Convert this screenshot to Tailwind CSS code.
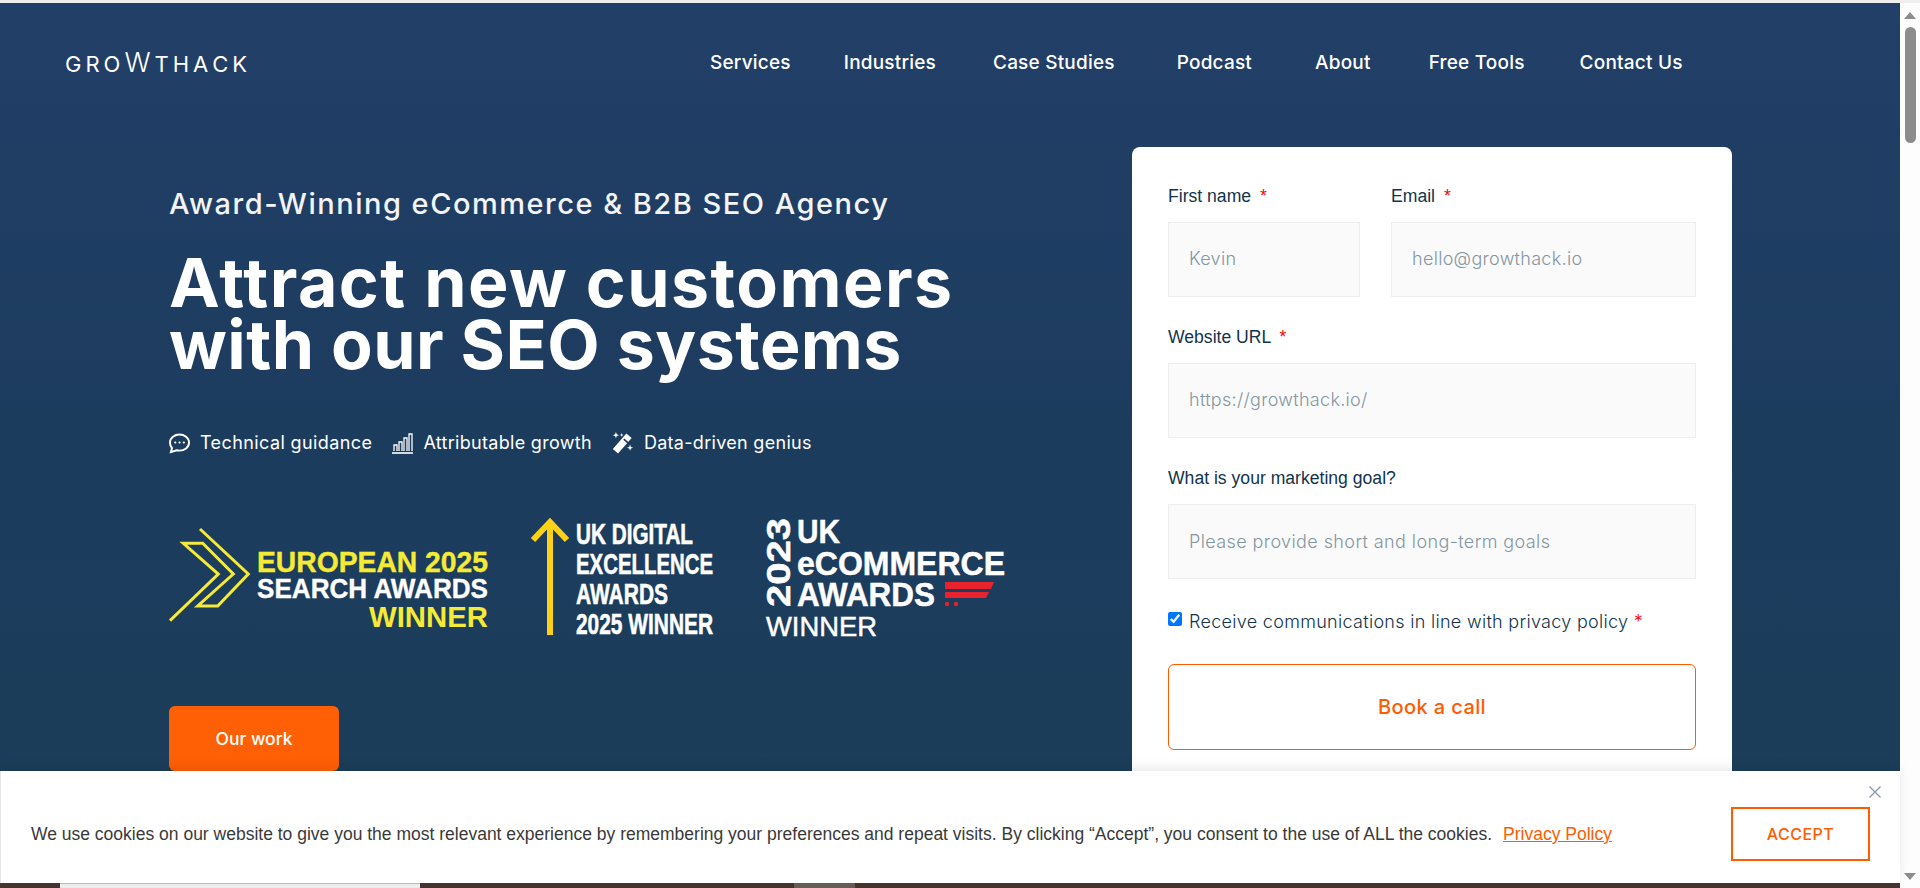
<!DOCTYPE html>
<html lang="en">
  <head>
    <meta charset="UTF-8" />
    <title>GrowthHack</title>
    <script src="https://cdn.jsdelivr.net/npm/@tailwindcss/browser@4"></script>
  </head>
  <body class="h-screen overflow-hidden bg-[#eeeeee] font-['Inter',sans-serif]">
    <div class="relative flex h-[888px] flex-col pt-[3px]">
      <div class="flex min-h-0 flex-1">
        <main class="min-w-0 flex-1">
          <!-- hero -->
          <section class="h-[880px] bg-gradient-to-b from-[#223f68] via-[#1c3c5e] to-[#1b3e58]">
            <header class="flex h-[120px] items-start">
              <a class="ml-[65px] mt-[46px] flex h-[28px] w-[182px] items-baseline justify-between text-[22px] leading-[28px] text-white"><span>G</span><span>R</span><span>O</span><span class="text-[27px] font-light">W</span><span>T</span><span>H</span><span>A</span><span>C</span><span>K</span></a>
              <nav class="ml-[463px] mt-[48px] flex text-[19px] leading-[24px] font-medium tracking-[0.2px] text-white">
                <a>Services</a>
                <a class="ml-[53px]">Industries</a>
                <a class="ml-[57px]">Case Studies</a>
                <a class="ml-[62px]">Podcast</a>
                <a class="ml-[63px]">About</a>
                <a class="ml-[58px]">Free Tools</a>
                <a class="ml-[55px]">Contact Us</a>
              </nav>
            </header>

            <div class="flex">
              <div class="ml-[169px] w-[963px] pt-[61px]">
                <p class="text-[29px] leading-[40px] font-medium tracking-[1.5px] text-[#f2f4f7]">Award-Winning eCommerce &amp; B2B SEO Agency</p>
                <h1 class="mt-[27px] text-[68px] leading-[62px] font-bold text-white"><span class="tracking-[1.45px]">Attract new customers</span><br /><span class="tracking-[0.45px]">with our SEO systems</span></h1>

                <ul class="mt-[56px] flex items-center text-[18px] leading-[24px] tracking-[0.4px] text-white">
                  <li class="flex items-center gap-[10px]">
                    <svg class="h-[21px] w-[21px]" viewBox="1 2 22 21" fill="none" stroke="white" stroke-width="2">
                      <path d="M12 3c5 0 10 3.400 10 8.500S17 20 12 20c-1 0-2-.1-3-.4L3 21.500l1.200-4.200C2.800 15.800 2 13.800 2 11.500 2 6.400 7 3 12 3z" />
                      <path d="M7.500 11.500h.1M12 11.500h.1M16.500 11.500h.1" stroke-linecap="round" stroke-width="2.200" />
                    </svg>
                    Technical guidance
                  </li>
                  <li class="ml-[20px] flex items-center gap-[10px] tracking-[0.3px]">
                    <svg class="h-[21px] w-[21px]" viewBox="0 0 21 21" fill="none" stroke="white" stroke-width="1.300">
                      <path d="M0 20h21" stroke-width="1.600" />
                      <path d="M2 18v-6h3v6M7 18V9h3v9M12 18V5h3v13M17 18V1h3v17" />
                    </svg>
                    Attributable growth
                  </li>
                  <li class="ml-[20px] flex items-center gap-[10px] tracking-[0.3px]">
                    <svg class="h-[22px] w-[22px]" viewBox="0.500 0 20.500 21" fill="white">
                      <path d="M14 1.500l5 4.300L6 20.500l-5-4.300z" />
                      <path d="M11 7.500l4.200 3.600 1-1.200L12 6.300z" fill="#1b3b5e" />
                      <path d="M4 0l.8 2.200L7 3 4.800 3.800 4 6l-.8-2.200L1 3l2.200-.8zM17.500 12l.8 2.200 2.200.8-2.200.8-.8 2.200-.8-2.200-2.200-.8 2.200-.8zM9.500 1l.5 1.300 1.300.5-1.300.5-.5 1.300-.5-1.300-1.300-.5 1.300-.5z" />
                    </svg>
                    Data-driven genius
                  </li>
                </ul>

                <!-- award logos -->
                <div class="mt-[58px] flex h-[130px] items-start font-['Liberation_Sans',sans-serif]">
                  <svg class="mt-[15px] h-[102px] w-[320px] shrink-0 overflow-visible" viewBox="0 0 320 102" fill="none">
                    <path d="M31 1 79.300 46 48.700 78H28.700L64.300 46 33.700 15.300H14.300L49.300 46 1 92.700" stroke="#f5ea35" stroke-width="3" />
                    <g font-weight="700">
                      <text x="88" y="44" font-size="29" fill="#f5ea35" stroke="#f5ea35" stroke-width="0.4" textLength="231" lengthAdjust="spacingAndGlyphs">EUROPEAN 2025</text>
                      <text x="88" y="70" font-size="28" fill="#ffffff" stroke="#ffffff" stroke-width="0.4" textLength="231" lengthAdjust="spacingAndGlyphs">SEARCH AWARDS</text>
                      <text x="200" y="99" font-size="29" fill="#f5ea35" textLength="119" lengthAdjust="spacingAndGlyphs">WINNER</text>
                    </g>
                  </svg>
                  <svg class="ml-[41px] h-[130px] w-[190px] shrink-0 overflow-visible" viewBox="0 0 190 130" fill="none">
                    <path d="M3 27 20 9 37 27M20 10V122" stroke="#fcd116" stroke-width="6" />
                    <g fill="#ffffff" stroke="#ffffff" stroke-width="0.6" font-weight="700" font-size="30">
                      <text x="46" y="31" textLength="117" lengthAdjust="spacingAndGlyphs">UK DIGITAL</text>
                      <text x="46" y="61" textLength="137" lengthAdjust="spacingAndGlyphs">EXCELLENCE</text>
                      <text x="46" y="91" textLength="92" lengthAdjust="spacingAndGlyphs">AWARDS</text>
                      <text x="46" y="121" textLength="137" lengthAdjust="spacingAndGlyphs">2025 WINNER</text>
                    </g>
                  </svg>
                  <svg class="ml-[46px] h-[130px] w-[245px] shrink-0 overflow-visible" viewBox="0 0 245 130" fill="none">
                    <g fill="#ffffff" font-weight="700" stroke="#ffffff" stroke-width="0.5">
                      <text transform="translate(24 94) rotate(-90)" font-size="34" textLength="89" lengthAdjust="spacingAndGlyphs">2023</text>
                      <text x="31" y="30" font-size="34" textLength="43" lengthAdjust="spacingAndGlyphs">UK</text>
                      <text x="31" y="62" font-size="33" textLength="208" lengthAdjust="spacingAndGlyphs">eCOMMERCE</text>
                      <text x="31" y="93" font-size="34" textLength="138" lengthAdjust="spacingAndGlyphs">AWARDS</text>
                      <text x="0" y="123" font-size="28" font-weight="400" textLength="111" lengthAdjust="spacingAndGlyphs">WINNER</text>
                    </g>
                    <path d="M179 69H228L225 76H179zM179 79H223L220 85H179z" fill="#e8232e" />
                    <circle cx="181" cy="91" r="2.200" fill="#e8232e" />
                    <circle cx="190" cy="91" r="2.200" fill="#e8232e" />
                  </svg>
                </div>

                <a class="mt-[63px] flex h-[65px] w-[170px] items-center justify-center rounded-[6px] bg-[#ff5f05] pt-[2px] text-[17.5px] font-medium text-white">Our work</a>
              </div>

              <!-- form card -->
              <form class="mt-[24px] h-[700px] w-[600px] rounded-t-[8px] bg-white px-[36px] pt-[37px] text-[#12344d]">
                <div class="grid grid-cols-[192px_305px] gap-x-[31px]">
                  <div>
                    <label class="block text-[17.6px] leading-[24px] font-['Liberation_Sans',sans-serif]">First name <span class="ml-[4px] text-[#ff0000]">*</span></label>
                    <input class="mt-[14px] h-[75px] w-full border border-[#eeeeee] bg-[#fafafa] px-[20px] pb-[2px] text-[18px] font-light tracking-[0.3px] placeholder:text-[#8496a3]" placeholder="Kevin" />
                  </div>
                  <div>
                    <label class="block text-[17.6px] leading-[24px] font-['Liberation_Sans',sans-serif]">Email <span class="ml-[4px] text-[#ff0000]">*</span></label>
                    <input class="mt-[14px] h-[75px] w-full border border-[#eeeeee] bg-[#fafafa] px-[20px] pb-[2px] text-[18px] font-light tracking-[0.3px] placeholder:text-[#8496a3]" placeholder="hello@growthack.io" />
                  </div>
                </div>
                <label class="mt-[28px] block text-[17.6px] leading-[24px] font-['Liberation_Sans',sans-serif]">Website URL <span class="ml-[4px] text-[#ff0000]">*</span></label>
                <input class="mt-[14px] h-[75px] w-full border border-[#eeeeee] bg-[#fafafa] px-[20px] pb-[2px] text-[18px] font-light tracking-[0.3px] placeholder:text-[#8496a3]" placeholder="https://growthack.io/" />
                <label class="mt-[28px] block text-[17.6px] leading-[24px] font-['Liberation_Sans',sans-serif]">What is your marketing goal?</label>
                <input class="mt-[14px] h-[75px] w-full border border-[#eeeeee] bg-[#fafafa] px-[20px] text-[18px] font-light tracking-[0.4px] placeholder:text-[#8496a3]" placeholder="Please provide short and long-term goals" />
                <div class="mt-[30px] flex h-[24px] items-center text-[18px] font-light tracking-[0.3px]">
                  <input type="checkbox" checked class="mb-[4px] mr-[7px] h-[14px] w-[14px] accent-[#0075ff]" />
                  Receive communications in line with privacy policy&nbsp;<span class="text-[#ff0000]">*</span>
                </div>
                <button type="button" class="mt-[31px] h-[86px] w-full rounded-[6px] border-[1.5px] border-[#ff5c00] text-[20px] font-medium tracking-[0.4px] text-[#ff5c00]">Book a call</button>
              </form>
            </div>
          </section>

          <!-- next section peeking out under the cookie bar -->
          <section class="flex h-[20px] bg-[#45352c]">
            <div class="ml-[60px] w-[360px] border-t border-[#bdbdbd] bg-[#eeeeee]"></div>
            <div class="ml-[374px] w-[61px] bg-[#6a5d55]"></div>
          </section>
        </main>

        <!-- browser scrollbar -->
        <aside class="relative w-[20px] shrink-0 bg-[#fdfdfd]">
          <div class="absolute left-[4px] top-[9px] h-0 w-0 border-x-[6px] border-b-[7px] border-x-transparent border-b-[#8c8c8c]"></div>
          <div class="absolute left-[5px] top-[24px] h-[116px] w-[11px] rounded-full bg-[#8c8c8c]"></div>
          <div class="absolute bottom-[8px] left-[4px] h-0 w-0 border-x-[6px] border-t-[7px] border-x-transparent border-t-[#8c8c8c]"></div>
        </aside>
      </div>

      <!-- cookie bar -->
      <div class="absolute left-0 top-[771px] flex h-[112px] w-[1900px] items-center border-l border-[#e5e5e5] bg-white pl-[30px] pt-[14px] font-['Liberation_Sans',sans-serif] shadow-[0_-4px_10px_rgba(0,0,0,0.08)]">
        <p class="text-[17.5px] leading-[24px] text-[#3a3a3a]">We use cookies on our website to give you the most relevant experience by remembering your preferences and repeat visits. By clicking “Accept”, you consent to the use of ALL the cookies.</p>
        <a class="ml-[11px] text-[17.5px] leading-[24px] text-[#ff5c00] underline">Privacy Policy</a>
        <a class="absolute left-[1730px] top-[36px] flex h-[54px] w-[139px] items-center justify-center border-2 border-[#ff5c00] font-['Inter',sans-serif] text-[16px] font-medium tracking-[0.5px] text-[#ff5c00]">ACCEPT</a>
        <svg class="absolute left-[1868px] top-[15px] h-[12px] w-[12px]" viewBox="0 0 12 12" stroke="#8496a3" stroke-width="1.200"><path d="M0.500 0.500l11 11M11.500 0.500l-11 11" /></svg>
      </div>
    </div>
  </body>
</html>
